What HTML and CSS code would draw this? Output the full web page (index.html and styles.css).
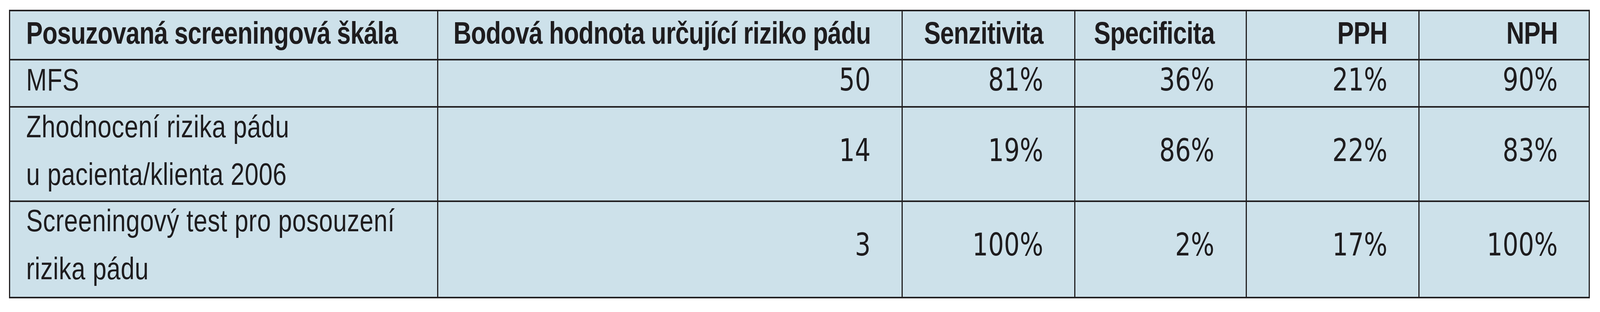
FILE: index.html
```html
<!DOCTYPE html>
<html lang="cs">
<head>
<meta charset="utf-8">
<title>Screeningové škály</title>
<link rel="stylesheet" href="styles.css">
</head>
<body>
<div class="table">
  <div class="cell head left"><span class="t">Posuzovaná screeningová škála</span></div>
  <div class="cell head"><span class="t">Bodová hodnota určující riziko pádu</span></div>
  <div class="cell head"><span class="t">Senzitivita</span></div>
  <div class="cell head"><span class="t">Specificita</span></div>
  <div class="cell head"><span class="t">PPH</span></div>
  <div class="cell head"><span class="t">NPH</span></div>

  <div class="cell r1 left"><span class="t">MFS</span></div>
  <div class="cell r1 num"><span class="t">50</span></div>
  <div class="cell r1 num"><span class="t">81%</span></div>
  <div class="cell r1 num"><span class="t">36%</span></div>
  <div class="cell r1 num"><span class="t">21%</span></div>
  <div class="cell r1 num"><span class="t">90%</span></div>

  <div class="cell r2 left"><span class="t">Zhodnocení rizika pádu<br>u pacienta/klienta 2006</span></div>
  <div class="cell r2 num"><span class="t">14</span></div>
  <div class="cell r2 num"><span class="t">19%</span></div>
  <div class="cell r2 num"><span class="t">86%</span></div>
  <div class="cell r2 num"><span class="t">22%</span></div>
  <div class="cell r2 num"><span class="t">83%</span></div>

  <div class="cell r3 left"><span class="t">Screeningový test pro posouzení<br>rizika pádu</span></div>
  <div class="cell r3 num"><span class="t">3</span></div>
  <div class="cell r3 num"><span class="t">100%</span></div>
  <div class="cell r3 num"><span class="t">2%</span></div>
  <div class="cell r3 num"><span class="t">17%</span></div>
  <div class="cell r3 num"><span class="t">100%</span></div>
</div>
</body>
</html>
```
FILE: styles.css
```css
:root {
  --k: 0.793184;
  --vline: 3.17px;
}

html, body {
  margin: 0;
  padding: 0;
  background: #ffffff;
}

.table {
  display: grid;
  grid-template-columns: 1093px 1185.8px 438.6px 435.5px 439.4px 433.1px;
  grid-template-rows: 122px 117px 238px 243px;
  column-gap: var(--vline);
  row-gap: 4px;
  padding: 4px var(--vline);
  width: max-content;
  margin: 25px 0 0 23px;
  background: #222022;
}

.cell {
  background: #cde1ea;
  color: #1e1c1e;
  display: flex;
  align-items: center;
  justify-content: flex-end;
  padding: 0 79.3px 18px 0;
  font-family: "Liberation Sans", Arial, sans-serif;
  font-size: 80px;
  line-height: 122px;
  white-space: nowrap;
  box-sizing: border-box;
  min-width: 0;
  min-height: 0;
}

.t {
  display: inline-block;
  transform: scaleX(var(--k));
  transform-origin: 100% 50%;
}

.cell.left {
  justify-content: flex-start;
  padding-left: 41.2px;
  padding-right: 0;
  letter-spacing: 0.8px;
}

.cell.left .t {
  transform-origin: 0 50%;
}

.cell.head {
  font-weight: bold;
  letter-spacing: -1px;
  padding-bottom: 11px;
}

.cell.num {
  font-family: "DejaVu Sans", sans-serif;
}

.cell.r3 {
  line-height: 123px;
  padding-bottom: 25px;
}
```
